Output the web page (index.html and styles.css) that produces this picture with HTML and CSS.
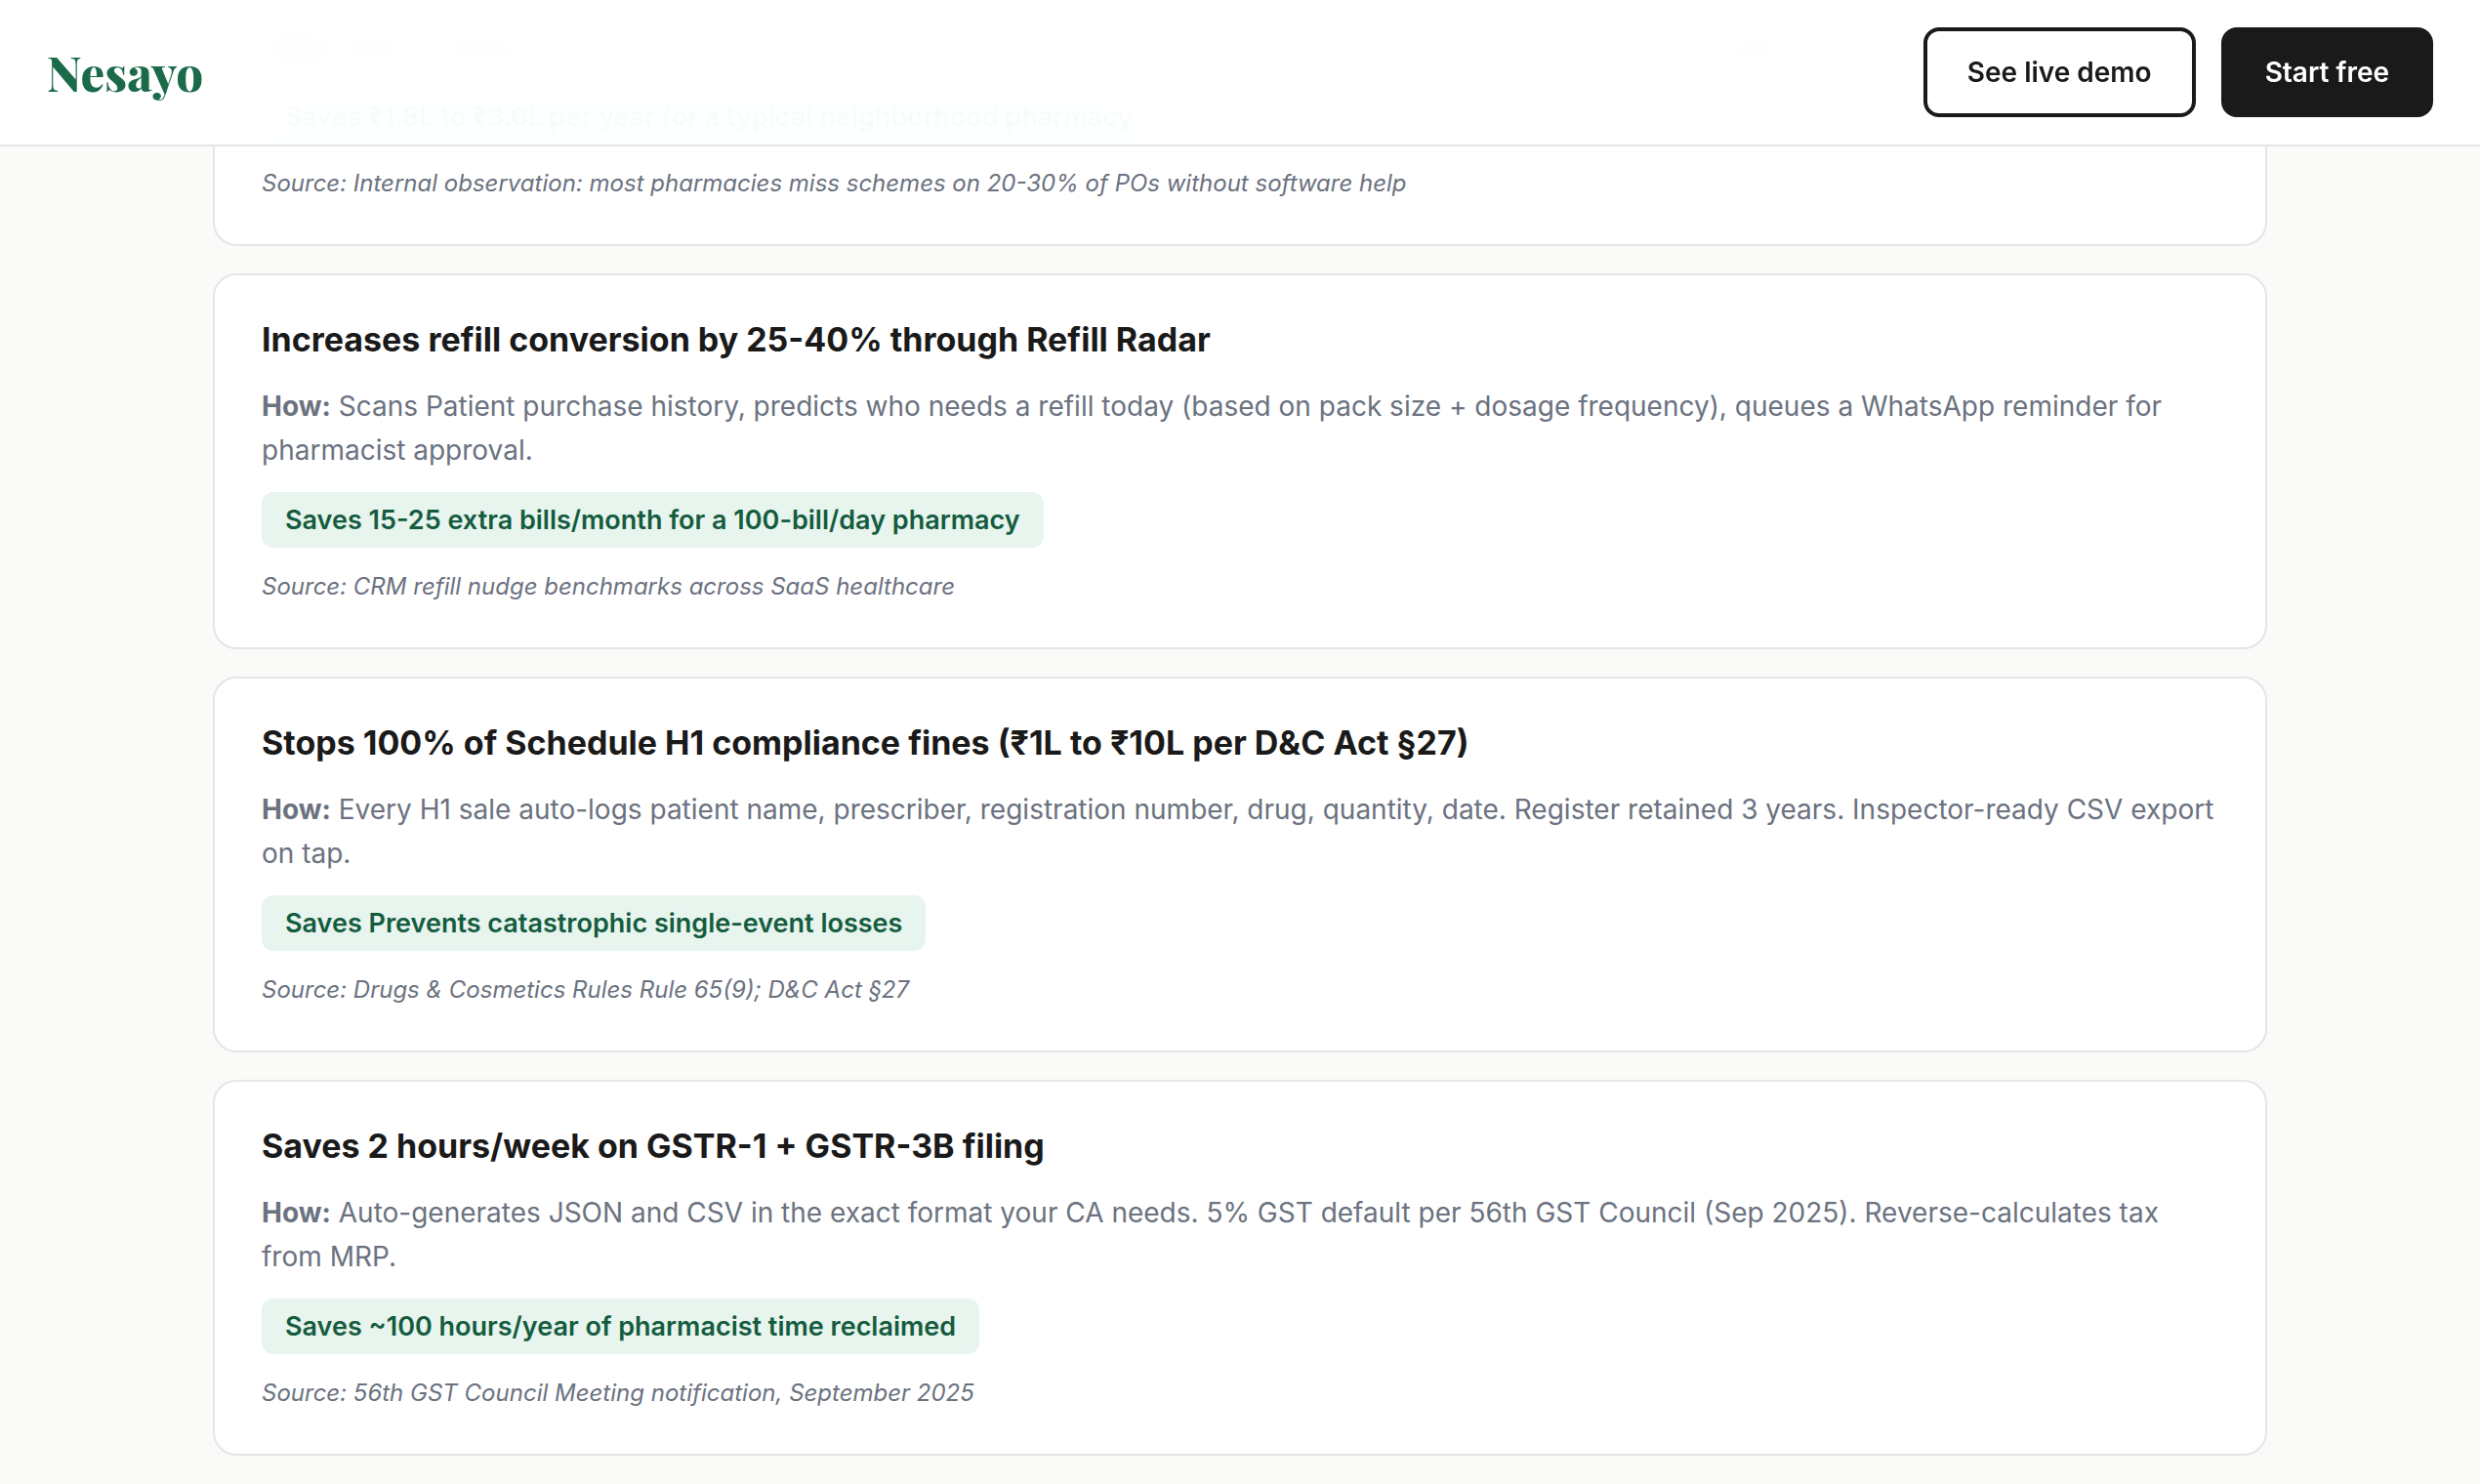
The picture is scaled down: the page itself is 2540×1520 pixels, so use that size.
FILE: index.html
```html
<!DOCTYPE html>
<html lang="en">
<head>
<meta charset="utf-8">
<meta name="viewport" content="width=device-width, initial-scale=1">
<title>Nesayo</title>
<link rel="stylesheet" href="styles.css">
</head>
<body>
<header class="site-header">
  <a class="logo" href="#">Nesayo</a>
  <nav class="actions">
    <button class="button button-outline" type="button">See live demo</button>
    <button class="button button-solid" type="button">Start free</button>
  </nav>
</header>
<main class="claims">
  <article class="card">
    <p class="card-how"><strong>How:</strong> Reads distributor schemes on every purchase order and invoice, then alerts the pharmacist before a free quantity or discount is missed.</p>
    <p class="chip"><span class="chip-faded">Saves ₹1.8L to ₹3.6L per year for a typical neighborhood pharmacy</span></p>
    <p class="card-source">Source: Internal observation: most pharmacies miss schemes on 20-30% of POs without software help</p>
  </article>
  <article class="card">
    <h3 class="card-title">Increases refill conversion by 25-40% through Refill Radar</h3>
    <p class="card-how"><strong>How:</strong> Scans Patient purchase history, predicts who needs a refill today (based on pack size + dosage frequency), queues a WhatsApp reminder for pharmacist approval.</p>
    <p class="chip">Saves 15-25 extra bills/month for a 100-bill/day pharmacy</p>
    <p class="card-source">Source: CRM refill nudge benchmarks across SaaS healthcare</p>
  </article>
  <article class="card">
    <h3 class="card-title">Stops 100% of Schedule H1 compliance fines (₹1L to ₹10L per D&amp;C Act §27)</h3>
    <p class="card-how"><strong>How:</strong> Every H1 sale auto-logs patient name, prescriber, registration number, drug, quantity, date. Register retained 3 years. Inspector-ready CSV export on tap.</p>
    <p class="chip">Saves Prevents catastrophic single-event losses</p>
    <p class="card-source">Source: Drugs &amp; Cosmetics Rules Rule 65(9); D&amp;C Act §27</p>
  </article>
  <article class="card">
    <h3 class="card-title">Saves 2 hours/week on GSTR-1 + GSTR-3B filing</h3>
    <p class="card-how"><strong>How:</strong> Auto-generates JSON and CSV in the exact format your CA needs. 5% GST default per 56th GST Council (Sep 2025). Reverse-calculates tax from MRP.</p>
    <p class="chip">Saves ~100 hours/year of pharmacist time reclaimed</p>
    <p class="card-source">Source: 56th GST Council Meeting notification, September 2025</p>
  </article>
</main>
</body>
</html>
```
FILE: styles.css
```css
* { box-sizing: border-box; }

body {
  margin: 0;
  background: #fafaf8;
  color: #1a1a1a;
  font-family: Inter, "Liberation Sans", sans-serif;
  font-size: 28px;
  line-height: 45px;
}

h3, p { margin: 0; }

.site-header {
  position: sticky;
  top: 0;
  z-index: 10;
  display: flex;
  align-items: center;
  justify-content: space-between;
  padding: 28px 48px;
  background: rgba(255, 255, 255, 0.95);
  backdrop-filter: blur(20px);
  border-bottom: 2px solid #e5e5e5;
}

.logo {
  color: #1b6b4a;
  font-family: "Playfair Display", "Liberation Serif", serif;
  font-size: 49px;
  font-weight: 800;
  line-height: 60px;
  text-decoration: none;
}

.actions { display: flex; gap: 26px; }

.button {
  padding: 20px 41px;
  border: 4px solid #1a1a1a;
  border-radius: 16px;
  font: 600 28px/44px Inter, "Liberation Sans", sans-serif;
}
.button-outline { background: transparent; color: #1a1a1a; }
.button-solid { background: #1a1a1a; color: #fff; }

/* The list continues from under the translucent header. */
.claims {
  display: flex;
  flex-direction: column;
  gap: 28px;
  max-width: 2200px;
  margin: -168px auto 0;
  padding: 0 48px 28px;
}

.card {
  padding: 42px 48px 43px;
  background: #fff;
  border: 2px solid #e5e5e5;
  border-radius: 24px;
}

.card-title {
  margin-bottom: 22px;
  font-size: 34px;
  font-weight: 700;
  line-height: 48px;
}

.card-how { margin-bottom: 20px; color: #6b7280; }

.chip {
  width: fit-content;
  margin-bottom: 21px;
  padding: 7px 24px;
  background: #e8f4ee;
  border-radius: 12px;
  color: #145c3e;
  font-size: 27px;
  font-weight: 600;
  line-height: 43px;
}

/* Shows faintly through the header. */
.chip-faded {
  position: relative;
  z-index: 11;
  opacity: 0.02;
}

.card-source {
  color: #6b7280;
  font-size: 24px;
  font-style: italic;
  line-height: 38px;
}
```
